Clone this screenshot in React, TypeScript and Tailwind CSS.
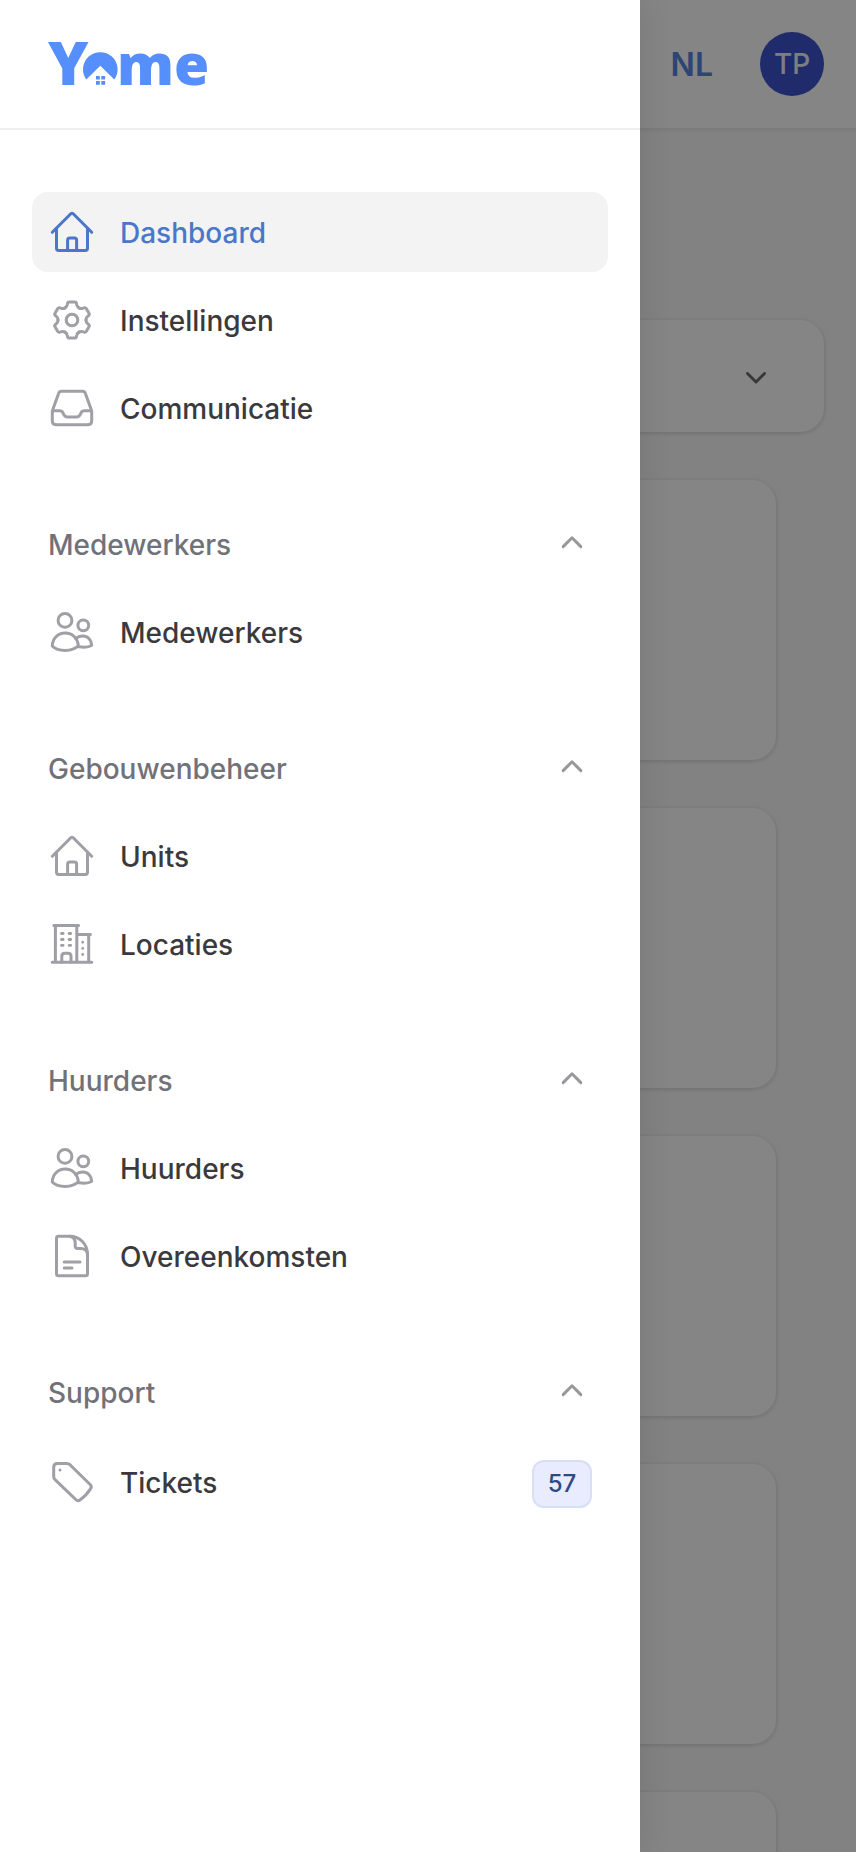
import React, { useState } from "react";

type IconProps = { children: React.ReactNode };

function Icon({ children }: IconProps) {
  return (
    <svg
      viewBox="0 0 48 48"
      className="size-12 shrink-0"
      fill="none"
      stroke="currentColor"
      strokeWidth="3"
      strokeLinecap="round"
      strokeLinejoin="round"
      aria-hidden="true"
    >
      {children}
    </svg>
  );
}

function HomeIcon() {
  return (
    <Icon>
      <path d="M4.3 24.3 22.8 5.8Q24 4.7 25.2 5.8L43.7 24.3" />
      <path d="M8.5 20.2V40.3Q8.5 42.4 10.6 42.4H37.4Q39.5 42.4 39.5 40.3V20.2" />
      <path d="M19.6 42.2V32.2Q19.6 30 21.8 30H26.4Q28.6 30 28.6 32.2V42.2" />
    </Icon>
  );
}

const TOOTH =
  "M-7 -12.1C-5.7 -12.9 -5 -13.6 -4.8 -15L-4.5 -16.5Q-4.2 -18.1 -2.6 -18.1L2.6 -18.1Q4.2 -18.1 4.5 -16.5L4.8 -15C5 -13.6 5.7 -12.9 7 -12.1";

function CogIcon() {
  return (
    <Icon>
      <g transform="translate(24 24)">
        <circle r="5.8" />
        {[0, 60, 120, 180, 240, 300].map((angle) => (
          <path key={angle} d={TOOTH} transform={`rotate(${angle})`} />
        ))}
      </g>
    </Icon>
  );
}

function InboxIcon() {
  return (
    <Icon>
      <path d="M13.6 7.3H34.4Q36.8 7.3 37.5 9.7L43 25Q43.7 26.8 43.7 28.5V37Q43.7 40.7 40 40.7H8Q4.3 40.7 4.3 37V28.5Q4.3 26.8 5 25L10.5 9.7Q11.2 7.3 13.6 7.3Z" />
      <path d="M4.5 26.7H11.5Q14 26.7 15 29L15.6 30.3Q16.7 33 19.5 33H28.5Q31.3 33 32.4 30.3L33 29Q34 26.7 36.5 26.7H43.5" />
    </Icon>
  );
}

function PeopleIcon() {
  return (
    <Icon>
      <circle cx="17" cy="12.4" r="6.9" />
      <circle cx="35.3" cy="17.3" r="5.4" />
      <path d="M4.3 38C4.3 30.5 10 25.1 17.2 25.1S30 30.5 30.3 37.8C27.4 40.8 23 42.4 17.2 42.4S7 40.8 4.3 38Z" />
      <path d="M27.8 30.6C29.6 28.9 32 28 34.8 28C39.8 28 43.7 32 43.7 37.4C41.2 39.2 36.5 39.6 30.8 38.8" />
    </Icon>
  );
}

function BuildingIcon() {
  return (
    <Icon>
      <path d="M5.8 5.4H30.6M7.4 5.4V42M28.8 5.4V42M4.2 42.2H43.8M29 14.6H42.4M40.7 14.6V42" />
      <path d="M13.8 42V36.2Q13.8 33.2 16.6 33.2H20.2Q23 33.2 23 36.2V42" />
      <path
        strokeWidth="2.8"
        d="M13.5 13.5H15.1M21.1 13.5H22.7M13.5 19.5H15.1M21.1 19.5H22.7M13.5 25.4H15.1M21.1 25.4H22.7M34.7 22.2V22.3M34.7 28.3V28.4M34.7 34.4V34.5"
      />
    </Icon>
  );
}

function DocumentIcon() {
  return (
    <Icon>
      <path d="M10.5 4.3H21.5C32 4.3 39.5 12 39.5 22.5V41.7Q39.5 43.7 37.5 43.7H10.5Q8.5 43.7 8.5 41.7V6.3Q8.5 4.3 10.5 4.3Z" />
      <path d="M22 4.3C25.5 5 27.2 7.5 27.2 11V14Q27.2 16.6 29.8 16.6H33C36.5 16.6 38.6 18.4 39.4 21.5" />
      <path d="M16.2 30H32M16.2 36H24" />
    </Icon>
  );
}

function TagIcon() {
  return (
    <Icon>
      <path d="M9.6 5.4H18.8Q20.6 5.4 22 6.7L42.4 26.7Q44 28.4 42.7 30.6Q38.6 37.4 31.9 42Q29.8 43.6 28 41.8L7 21.6Q5.7 20.2 5.7 18.4V9.3Q5.7 5.4 9.6 5.4Z" />
      <circle cx="12" cy="12" r="1.5" fill="currentColor" stroke="none" />
    </Icon>
  );
}

function Chevron({ down = false }: { down?: boolean }) {
  return (
    <svg
      viewBox="0 0 40 40"
      className="size-10 shrink-0"
      fill="none"
      stroke="currentColor"
      strokeWidth="3"
      strokeLinecap="round"
      strokeLinejoin="round"
      aria-hidden="true"
    >
      <path d={down ? "M11.5 17.5 20 26 28.5 17.5" : "M11.2 22.6 20 13.8 28.8 22.6"} />
    </svg>
  );
}

function Logo() {
  return (
    <svg
      viewBox="0 -24 168 96"
      className="h-24 w-42 fill-[#568efb] font-['Open_Sans'] font-extrabold"
      role="img"
      aria-label="Yome"
    >
      <text x="0" y="45" className="text-[61px]">Y</text>
      <path d="M38.3 39.6A17.3 17.3 0 1 1 66.3 39.6L52.3 25.7Z" />
      <path d="M48 36h3.8v3.5H48zM53.3 36h3.8v3.5h-3.8zM48 41h3.8v3.8H48zM53.3 41h3.8v3.8h-3.8z" />
      <text x="69" y="45" className="text-[57px]">m</text>
      <text x="126" y="45" className="text-[57px]">e</text>
    </svg>
  );
}

type Item = { label: string; icon: () => React.ReactElement; active?: boolean; badge?: number };
type Section = { title?: string; items: Item[] };

const SECTIONS: Section[] = [
  {
    items: [
      { label: "Dashboard", icon: HomeIcon, active: true },
      { label: "Instellingen", icon: CogIcon },
      { label: "Communicatie", icon: InboxIcon },
    ],
  },
  { title: "Medewerkers", items: [{ label: "Medewerkers", icon: PeopleIcon }] },
  {
    title: "Gebouwenbeheer",
    items: [
      { label: "Units", icon: HomeIcon },
      { label: "Locaties", icon: BuildingIcon },
    ],
  },
  {
    title: "Huurders",
    items: [
      { label: "Huurders", icon: PeopleIcon },
      { label: "Overeenkomsten", icon: DocumentIcon },
    ],
  },
  { title: "Support", items: [{ label: "Tickets", icon: TagIcon, badge: 57 }] },
];

function NavItem({ label, icon: ItemIcon, active, badge }: Item) {
  return (
    <li>
      <a
        href="#"
        aria-current={active ? "page" : undefined}
        className={
          active
            ? "flex items-center gap-6 rounded-2xl bg-[#f3f3f3] p-4 text-[#4a77ca]"
            : "flex items-center gap-6 rounded-2xl p-4 text-[#3a3a3e]"
        }
      >
        <span className={active ? "text-[#4a77ca]" : "text-[#9f9fa6]"}>
          <ItemIcon />
        </span>
        <span className="grow pt-0.5">{label}</span>
        {badge !== undefined && (
          <span className="pt-1">
            <span className="flex h-12 min-w-15 items-center justify-center rounded-xl border-2 border-[#d8dff4] bg-[#e8ecfe] px-3 text-2xl text-[#2f4a80]">
              {badge}
            </span>
          </span>
        )}
      </a>
    </li>
  );
}

function NavSection({ title, items }: Section) {
  const [open, setOpen] = useState(true);
  return (
    <section className="flex flex-col gap-2">
      {title && (
        <button
          type="button"
          aria-expanded={open}
          onClick={() => setOpen(!open)}
          className="flex h-20 items-center justify-between px-4 text-[#717178]"
        >
          <span className="pt-0.5">{title}</span>
          <span className="text-[#98989d]">
            <Chevron down={!open} />
          </span>
        </button>
      )}
      {open && (
        <ul className="flex flex-col gap-2">
          {items.map((item) => (
            <NavItem key={item.label} {...item} />
          ))}
        </ul>
      )}
    </section>
  );
}

export default function App() {
  return (
    <div className="relative h-screen overflow-hidden bg-[#fafafa] font-['Inter',sans-serif] text-[28px] leading-10 font-medium">
      <header className="flex h-[130px] items-center justify-end gap-[47px] border-b-2 border-[#ececec] bg-white px-8 shadow-[0_1px_3px_rgba(0,0,0,0.06)]">
        <button type="button" className="pt-0.5 text-[32px] font-semibold text-[#5584dc]">
          NL
        </button>
        <button
          type="button"
          className="flex size-16 items-center justify-center rounded-full bg-[#3f54cd] text-[#f0f1fa]"
        >
          TP
        </button>
      </header>
      <main className="flex flex-col gap-12 px-8 pt-[190px]">
        <button
          type="button"
          aria-haspopup="listbox"
          className="flex h-28 items-center justify-end rounded-3xl bg-white px-12 text-[#6b6b70] shadow-[0_1px_4px_1px_rgba(0,0,0,0.12)]"
        >
          <Chevron down />
        </button>
        <div className="flex flex-col gap-12 px-12">
          {[1, 2, 3, 4, 5].map((card) => (
            <div
              key={card}
              className="h-[280px] rounded-3xl bg-white shadow-[0_1px_4px_1px_rgba(0,0,0,0.12)]"
            />
          ))}
        </div>
      </main>

      <div className="absolute inset-0 bg-black/48" />
      <aside className="absolute inset-y-0 left-0 w-[640px] max-w-[calc(100%-64px)] overflow-hidden bg-white shadow-[0_0_32px_rgba(0,0,0,0.1)]">
        <div className="flex h-[130px] items-center border-b-2 border-[#efefef] px-12">
          <Logo />
        </div>
        <nav className="flex flex-col gap-14 px-8 pt-[62px]">
          {SECTIONS.map((section, index) => (
            <NavSection key={index} {...section} />
          ))}
        </nav>
      </aside>
    </div>
  );
}
